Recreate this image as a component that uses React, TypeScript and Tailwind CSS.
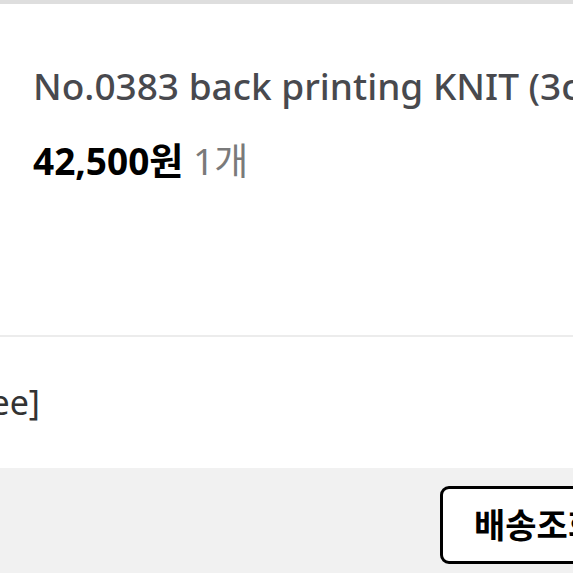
import React from 'react';

const font = { fontFamily: '"Noto Sans", "Noto Sans CJK KR", sans-serif' };

const App: React.FC = () => {
  return (
    <div className="w-[573px] h-[573px] overflow-hidden bg-white flex flex-col" style={font}>
      {/* top edge of previous block */}
      <div className="h-[4px] bg-[#dedede] shrink-0" />

      {/* product info */}
      <div className="h-[333px] shrink-0 pl-[33px] pt-[58px] border-b-[2px] border-[#ececec]">
        <p className="text-[37px] leading-[48px] font-medium text-[#48494e] whitespace-nowrap">
          No.0383 back printing KNIT (3color)
        </p>
        <p className="mt-[28px] text-[37px] leading-[46px] whitespace-nowrap">
          <span className="font-bold text-black">42,500원</span>{' '}
          <span className="text-[#7a7a7a]">1개</span>
        </p>
      </div>

      {/* option text, clipped on the left */}
      <div className="h-[131px] shrink-0 flex items-center overflow-hidden">
        <div className="w-[40px] flex justify-end shrink-0">
          <span className="text-[34px] text-[#333] whitespace-nowrap">[Free]</span>
        </div>
      </div>

      {/* footer with button */}
      <div className="flex-1 bg-[#f1f1f1] pt-[18px] pl-[440px]">
        <button className="w-[200px] h-[78px] bg-white border-[3px] border-black rounded-[9px] flex items-center pl-[31px] text-[34px] font-bold text-black whitespace-nowrap">
          배송조회
        </button>
      </div>
    </div>
  );
};

export default App;
